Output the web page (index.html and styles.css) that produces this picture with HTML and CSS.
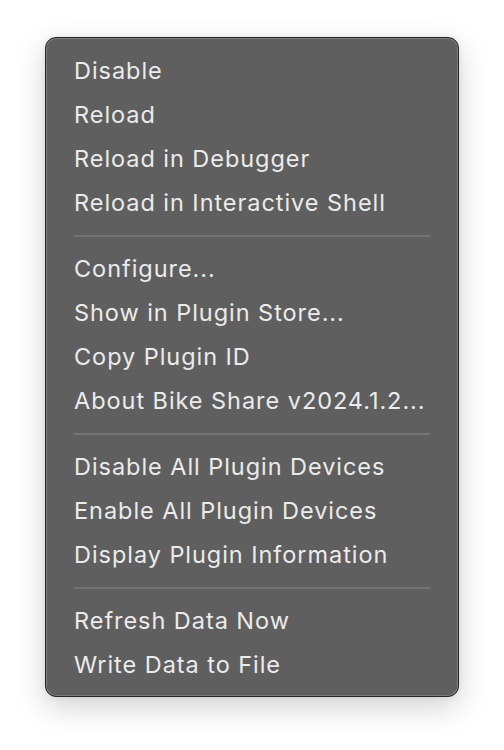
FILE: index.html
```html
<!DOCTYPE html>
<html>
<head>
<meta charset="utf-8">
<link rel="stylesheet" href="styles.css">
</head>
<body>
<div class="menu">
  <div class="item">Disable</div>
  <div class="item">Reload</div>
  <div class="item">Reload in Debugger</div>
  <div class="item">Reload in Interactive Shell</div>
  <div class="sep"></div>
  <div class="item">Configure...</div>
  <div class="item">Show in Plugin Store...</div>
  <div class="item">Copy Plugin ID</div>
  <div class="item">About Bike Share v2024.1.2...</div>
  <div class="sep"></div>
  <div class="item">Disable All Plugin Devices</div>
  <div class="item">Enable All Plugin Devices</div>
  <div class="item">Display Plugin Information</div>
  <div class="sep"></div>
  <div class="item">Refresh Data Now</div>
  <div class="item">Write Data to File</div>
</div>
</body>
</html>
```
FILE: styles.css
```css
html, body {
  margin: 0;
  padding: 0;
  background: #ffffff;
}
body {
  width: 504px;
  height: 750px;
  overflow: hidden;
  font-family: Inter, "Noto Sans", "Liberation Sans", sans-serif;
}
.menu {
  margin: 37px 0 0 45px;
  width: 414px;
  height: 660px;
  box-sizing: border-box;
  background: #5f5f5f;
  border: 1px solid #262626;
  border-radius: 11px;
  box-shadow: inset 0 0 0 1px #7c7c7c, 0 10px 30px rgba(0,0,0,0.18), 0 0 6px rgba(0,0,0,0.08);
  padding: 11px 28px 0 28px;
  display: flex;
  flex-direction: column;
}
.item {
  height: 44px;
  line-height: 44px;
  color: #ebebeb;
  font-size: 23.5px;
  letter-spacing: 0.95px;
  white-space: nowrap;
}
.sep {
  height: 22px;
  display: flex;
  align-items: center;
}
.sep::before {
  content: "";
  display: block;
  width: 100%;
  height: 2px;
  background: #747474;
}
```
